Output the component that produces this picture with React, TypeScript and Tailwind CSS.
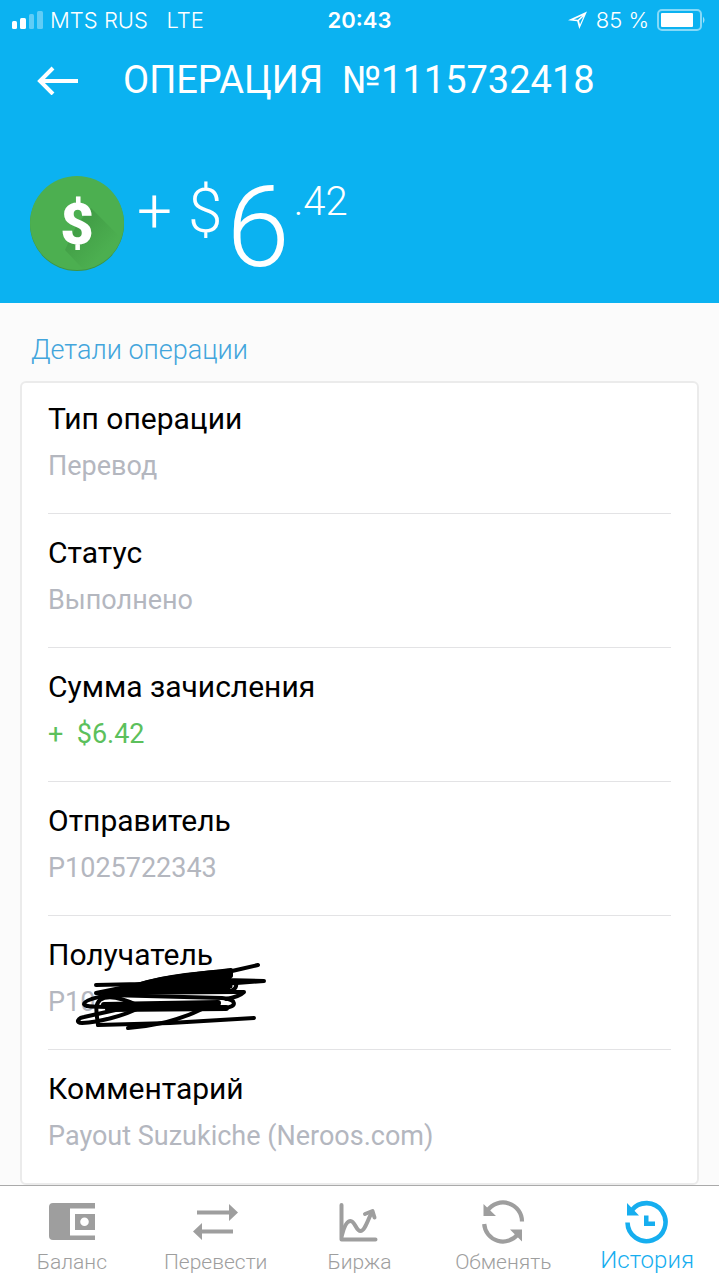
import type { ReactNode } from "react";

const DETAILS = [
  { label: "Тип операции", value: "Перевод" },
  { label: "Статус", value: "Выполнено" },
  { label: "Сумма зачисления", value: "+  $6.42", income: true },
  { label: "Отправитель", value: "P1025722343" },
  { label: "Получатель", value: "P10", hidden: true },
  { label: "Комментарий", value: "Payout Suzukiche (Neroos.com)" },
];

const TABS: { label: string; icon: ReactNode; active?: boolean }[] = [
  { label: "Баланс", icon: <WalletIcon /> },
  { label: "Перевести", icon: <TransferIcon /> },
  { label: "Биржа", icon: <ChartIcon /> },
  { label: "Обменять", icon: <ExchangeIcon /> },
  { label: "История", icon: <HistoryIcon />, active: true },
];

function WalletIcon() {
  return (
    <svg width="48" height="44" viewBox="0 0 48 44" fill="currentColor" aria-hidden="true">
      <path d="M5 3H47V8.500H22V35.500H47V40H5Q1 40 1 36V7Q1 3 5 3Z" />
      <path fillRule="evenodd" d="M27 14H47V30H27ZM36.500 17.500A4.300 4.300 0 1 0 36.500 26.100A4.300 4.300 0 1 0 36.500 17.500Z" />
    </svg>
  );
}

function TransferIcon() {
  return (
    <svg width="48" height="44" viewBox="0 0 48 44" fill="currentColor" aria-hidden="true">
      <path d="M5 10.500H37V4L46 12.500L37 21V14.500H5ZM41 29.500H10V23L1 31.500L10 40V33.500H41Z" />
    </svg>
  );
}

function ChartIcon() {
  return (
    <svg width="48" height="44" viewBox="0 0 48 44" fill="none" stroke="currentColor" strokeWidth="4" strokeLinecap="round" strokeLinejoin="round" aria-hidden="true">
      <path d="M6.500 5V39.500H40.500" />
      <path d="M7 35C9 27 12 21 15.500 21C20 21 21 31 25.500 31C30 31 33 19 37 12" />
      <path d="M30 14L37.500 11L39.500 17.500" />
    </svg>
  );
}

function ExchangeIcon() {
  return (
    <svg width="48" height="44" viewBox="0 0 48 44" aria-hidden="true">
      <g fill="none" stroke="currentColor" strokeWidth="4.200">
        <path d="M8.500 10.500A19 19 0 0 1 43 21.500" />
        <path d="M5.200 24A18.800 18.800 0 0 0 39 34" />
      </g>
      <path fill="currentColor" d="M4.500 4V16H17ZM43 41.500V29.500H31Z" />
    </svg>
  );
}

function HistoryIcon() {
  return (
    <svg width="48" height="44" viewBox="0 0 48 44" aria-hidden="true">
      <path d="M8.500 10.500A19 19 0 1 1 4.500 22.500" fill="none" stroke="currentColor" strokeWidth="4.600" />
      <path fill="currentColor" d="M4 3V15.500H16ZM21 15.500H25.500V21.500H32V26H21Z" />
    </svg>
  );
}

function StatusBar() {
  return (
    <div className="grid h-10 grid-cols-[1fr_auto_1fr] items-center px-3 font-['Inter','Liberation_Sans',sans-serif] text-[22px] leading-10 font-light">
      <div className="flex items-center gap-1.5">
        <svg width="32" height="20" viewBox="0 0 32 20" fill="currentColor" aria-hidden="true">
          <rect x="0" y="11" width="5" height="8" rx="1.500" />
          <rect x="8" y="8" width="6" height="11" rx="1.500" />
          <rect x="17" y="4" width="5" height="15" rx="1.500" opacity=".35" />
          <rect x="25" y="1" width="6" height="18" rx="1.500" opacity=".35" />
        </svg>
        <span className="whitespace-pre">MTS RUS   LTE</span>
      </div>
      <span className="font-semibold">20:43</span>
      <div className="flex items-center justify-end gap-2">
        <svg width="20" height="20" viewBox="0 0 20 20" fill="currentColor" aria-hidden="true">
          <path fillRule="evenodd" d="M19 1.500L0 10.200L9.200 11.200L11.300 19ZM14.500 5.500L9.800 9.800L5.800 9.500ZM15.500 6.500L12 14.500L11 10.800Z" />
        </svg>
        <span>85 %</span>
        <svg width="50" height="24" viewBox="0 0 50 24" aria-hidden="true">
          <rect x="1" y="2" width="43" height="20" rx="4" fill="none" stroke="currentColor" strokeWidth="2" opacity=".5" />
          <rect x="4" y="5" width="32" height="14" rx="1" fill="currentColor" />
          <path d="M46 8.500Q49 12 46 15.500Z" fill="currentColor" opacity=".6" />
        </svg>
      </div>
    </div>
  );
}

function DollarBadge() {
  return (
    <div className="relative flex size-24 shrink-0 items-center justify-center">
      <svg className="absolute inset-0 size-full" viewBox="0 0 96 96" aria-hidden="true">
        <defs>
          <clipPath id="coin">
            <circle cx="48" cy="47" r="47" />
          </clipPath>
          <linearGradient id="shade" x1="0" y1="0" x2="1" y2="1">
            <stop offset=".2" stopColor="#2f7d33" stopOpacity=".35" />
            <stop offset=".55" stopColor="#2f7d33" stopOpacity="0" />
          </linearGradient>
        </defs>
        <circle cx="48" cy="48" r="47" fill="#3f9442" />
        <circle cx="48" cy="47" r="47" fill="#4caf50" />
        <path d="M62 32L110 80V110H70L36 74L48 48Z" fill="url(#shade)" clipPath="url(#coin)" />
      </svg>
      <span className="relative text-[58px] leading-none font-black">$</span>
    </div>
  );
}

function Scribble() {
  return (
    <svg className="absolute -top-6 left-6 h-[76px] w-[200px]" viewBox="72 962 200 76" fill="none" stroke="#000" strokeWidth="4" strokeLinecap="round" strokeLinejoin="round" aria-hidden="true">
      <path d="M258 965L232 971C205 972 165 976 141 984L96 985" />
      <path d="M141 984C165 976 205 973 231 970V976L224 980L264 981L120 992Z" fill="#000" />
      <path d="M140 984L96 993L236 992L244 992C240 996 232 998 226 999" />
      <path d="M236 983C237 988 234 990 228 992" />
      <path d="M130 988L230 986M110 992L228 989" strokeWidth="5" />
      <path d="M120 993C100 996 84 1000 84 1004C86 1008 98 1006 110 1007" />
      <path d="M98 1025C97 1015 94 1005 100 1000C108 994 124 999 137 1005" />
      <path d="M137 1009C122 1016 100 1022 82 1023C75 1023 78 1018 84 1017L120 1009" />
      <path d="M108 995L222 998C237 999 238 1007 224 1008" />
      <path d="M104 1005L218 1003M108 1009L226 1008" strokeWidth="6" />
      <path d="M98 1025L170 1023L254 1018" />
      <path d="M128 1028C155 1026 180 1020 202 1009" />
    </svg>
  );
}

export default function App() {
  return (
    <div className="flex min-h-screen flex-col bg-[#fbfbfb] font-['Roboto',sans-serif]">
      <header className="bg-[#0bb2f1] pb-8 text-white">
        <StatusBar />
        <div className="flex h-20 items-center gap-11 pl-9">
          <button type="button" aria-label="Назад">
            <svg width="43" height="30" viewBox="0 0 43 30" fill="none" stroke="currentColor" strokeWidth="4" aria-hidden="true">
              <path d="M42 16H5M17 3L4 16L17 29" />
            </svg>
          </button>
          <h1 className="text-[38px] leading-none whitespace-pre">ОПЕРАЦИЯ  №1115732418</h1>
        </div>
        <div className="mt-8 flex h-[119px] items-start pl-[29px] leading-none font-light">
          <div className="pt-6">
            <DollarBadge />
          </div>
          <span className="ml-3 pt-7 text-[62px]">+</span>
          <span className="ml-4 pt-7 text-[62px]">$</span>
          <span className="ml-1 pt-[18px] text-[114px]">6</span>
          <span className="ml-1 pt-[30px] text-[40px]">.42</span>
        </div>
      </header>

      <main className="flex-1 px-5">
        <h2 className="px-[11px] pt-9 pb-5 text-[27px] leading-[22px] font-light text-[#42a5dc]">Детали операции</h2>
        <dl className="rounded-md border-2 border-[#ebebeb] bg-white px-[26px]">
          {DETAILS.map((d) => (
            <div key={d.label} className="border-b border-[#e3e3e5] pt-[21px] pb-[31px] first:pt-[18px] last:border-b-0">
              <dt className="text-[30px] leading-9 text-black">{d.label}</dt>
              <dd className={`relative mt-[13px] text-[27px] leading-8 whitespace-pre ${d.income ? "text-[#5cc05c]" : "text-[#b4b7bf]"}`}>
                {d.value}
                {d.hidden && <Scribble />}
              </dd>
            </div>
          ))}
        </dl>
      </main>

      <nav className="grid grid-cols-5 border-t border-[#aaaaaa] bg-white pt-[14px] pb-1.5">
        {TABS.map((t) => (
          <button
            key={t.label}
            type="button"
            className={`flex flex-col items-center gap-0.5 font-light ${t.active ? "text-[24px] leading-7 text-[#16aeef]" : "text-[21px] leading-8 text-[#9e9e9e]"}`}
          >
            {t.icon}
            {t.label}
          </button>
        ))}
      </nav>
    </div>
  );
}
